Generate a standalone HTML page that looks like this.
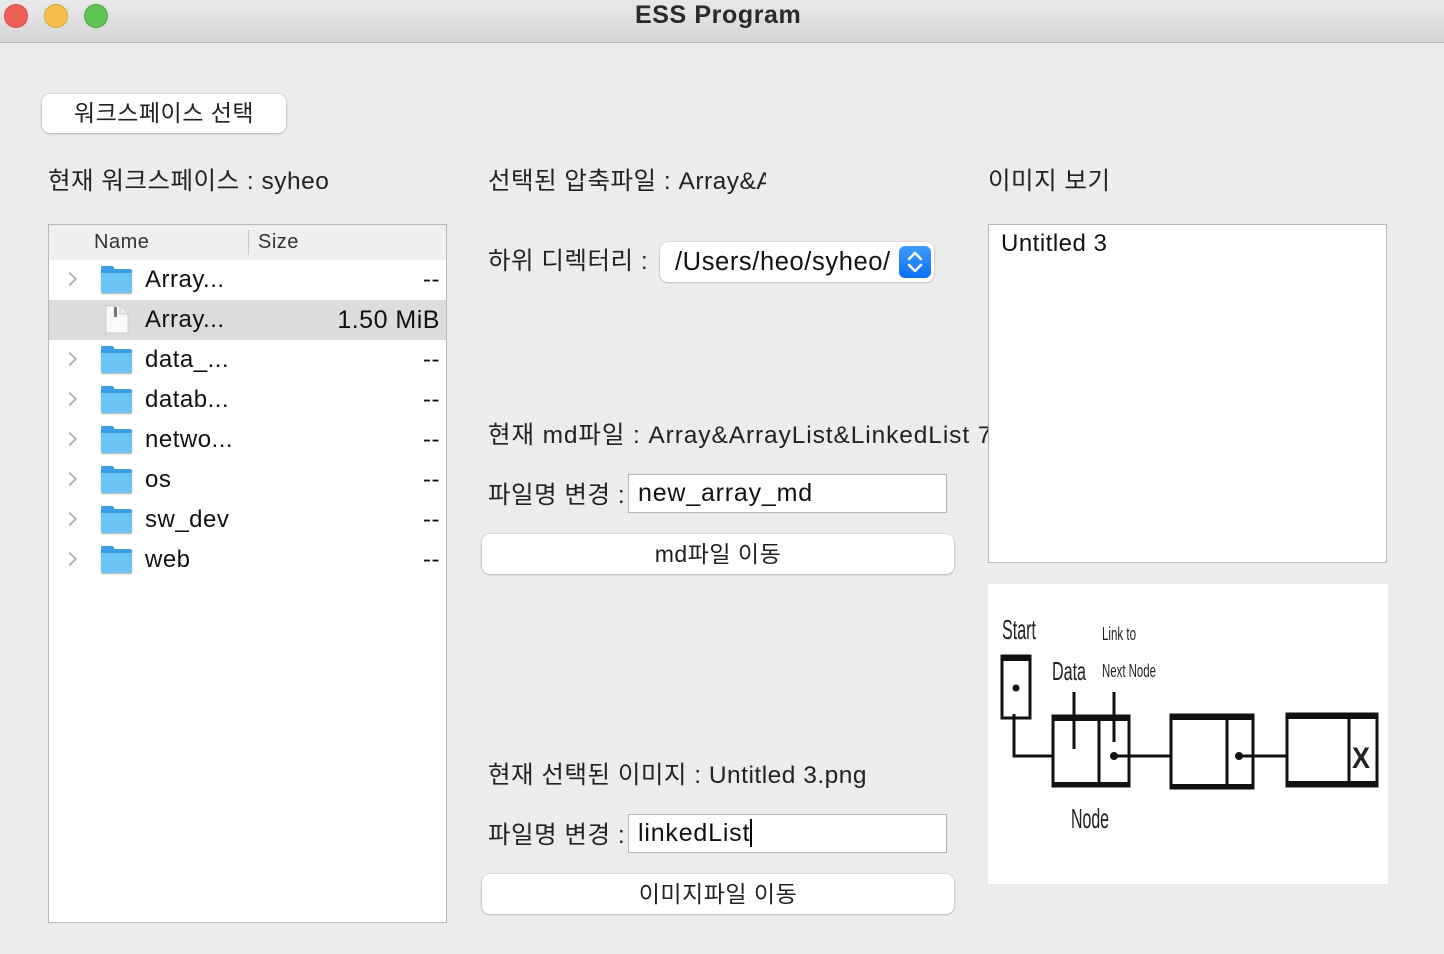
<!DOCTYPE html>
<html><head><meta charset="utf-8">
<style>
*{margin:0;padding:0;box-sizing:border-box}
body{width:1444px;height:954px;background:#ececec;font-family:"Liberation Sans","Noto Sans CJK KR",sans-serif;color:#222;position:relative;overflow:hidden}
.abs{position:absolute;white-space:nowrap}
.title{left:0;top:0;width:1444px;height:43px;background:linear-gradient(#e8e8e8,#d6d6d6);border-bottom:1px solid #b8b8b8}
.dot{position:absolute;top:4px;width:24px;height:24px;border-radius:50%}
.lbl{font-size:24.5px;line-height:30px;letter-spacing:0.5px}
.btn{background:#fff;border-radius:8px;box-shadow:0 0.5px 2px rgba(0,0,0,.35);text-align:center;font-size:23px;line-height:40px;color:#222;letter-spacing:0.5px}
.input{background:#fff;border:1px solid #b5b5b5;font-size:25px;line-height:36px;padding-left:9px;color:#111;letter-spacing:0.8px}
.tree{left:48px;top:224px;width:399px;height:699px;background:#fff;border:1px solid #b8b8b8}
.hdr{position:absolute;left:0;top:0;width:397px;height:35px;background:#efefef;font-size:20px;line-height:34px;color:#333;letter-spacing:0.5px}
.row{position:absolute;left:0;width:397px;height:40px;font-size:24px;line-height:40px;color:#111;letter-spacing:0.5px}
.chev{position:absolute;left:16px;top:14px;width:10px;height:10px;border-right:2px solid #b5b5b5;border-top:2px solid #b5b5b5;transform:rotate(45deg)}
.fold{position:absolute;left:52px;top:9px;width:31px;height:24px;background:#6cc4f5;border-radius:2px;border-top:4px solid #3b9ee0;box-shadow:0 1px 1px rgba(0,0,0,.3)}
.fold:before{content:"";position:absolute;left:0;top:-7px;width:13px;height:4px;background:#3b9ee0;border-radius:2px 2px 0 0}
.name{position:absolute;left:96px}
.size{position:absolute;right:6px}
</style></head><body>
<div class="abs title">
 <div class="dot" style="left:4px;background:#ee5f57;border:1px solid #d9463e"></div>
 <div class="dot" style="left:44px;background:#f5be4f;border:1px solid #dea236"></div>
 <div class="dot" style="left:84px;background:#61c554;border:1px solid #4aa83d"></div>
 <div class="abs" style="left:635px;top:0;font-size:25px;font-weight:bold;line-height:30px;color:#2a2a2a;letter-spacing:0.6px">ESS Program</div>
</div>

<div class="abs btn" style="left:42px;top:94px;width:244px;height:39px;line-height:38px">워크스페이스 선택</div>
<div class="abs lbl" style="left:48px;top:167px">현재 워크스페이스 : syheo</div>

<div class="abs tree">
 <div class="hdr"><span style="position:absolute;left:45px">Name</span><span style="position:absolute;left:199px;top:5px;width:1px;height:25px;background:#c8c8c8"></span><span style="position:absolute;left:209px">Size</span></div>
 <div class="row" style="top:35px"><div class="chev"></div><div class="fold"></div><span class="name">Array...</span><span class="size">--</span></div>
 <div class="row" style="top:75px;background:#dcdcdc"><svg style="position:absolute;left:54px;top:5px" width="28" height="30"><path d="M3 1H17L25 9V28H3Z" fill="#fafafa" stroke="#ccc"/><path d="M17 1V9H25" fill="#eee" stroke="#ccc"/><rect x="11" y="2" width="3" height="10" fill="#777"/></svg><span class="name">Array...</span><span class="size" style="font-size:25px">1.50 MiB</span></div>
 <div class="row" style="top:115px"><div class="chev"></div><div class="fold"></div><span class="name">data_...</span><span class="size">--</span></div>
 <div class="row" style="top:155px"><div class="chev"></div><div class="fold"></div><span class="name">datab...</span><span class="size">--</span></div>
 <div class="row" style="top:195px"><div class="chev"></div><div class="fold"></div><span class="name">netwo...</span><span class="size">--</span></div>
 <div class="row" style="top:235px"><div class="chev"></div><div class="fold"></div><span class="name">os</span><span class="size">--</span></div>
 <div class="row" style="top:275px"><div class="chev"></div><div class="fold"></div><span class="name">sw_dev</span><span class="size">--</span></div>
 <div class="row" style="top:315px"><div class="chev"></div><div class="fold"></div><span class="name">web</span><span class="size">--</span></div>
</div>

<div class="abs lbl" style="left:488px;top:167px;width:278px;overflow:hidden">선택된 압축파일 : Array&amp;ArrayList</div>
<div class="abs lbl" style="left:488px;top:247px">하위 디렉터리 :</div>
<div class="abs" style="left:660px;top:242px;width:274px;height:40px;background:#fff;border-radius:8px;box-shadow:0 0.5px 2px rgba(0,0,0,.3);overflow:hidden">
 <div class="abs" style="left:15px;top:0;font-size:25.5px;line-height:40px;color:#111;letter-spacing:0.6px">/Users/heo/syheo/</div>
 <div class="abs" style="right:3px;top:4px;width:32px;height:32px;background:linear-gradient(#3f9bff,#0a6ff5);border-radius:6px">
  <svg width="32" height="32"><path d="M10 13L16 7L22 13M10 19L16 25L22 19" fill="none" stroke="#fff" stroke-width="2.5" stroke-linecap="round" stroke-linejoin="round"/></svg>
 </div>
</div>

<div class="abs lbl" style="left:488px;top:421px;width:500px;overflow:hidden;letter-spacing:0.9px">현재 md파일 : Array&amp;ArrayList&amp;LinkedList 7</div>
<div class="abs lbl" style="left:488px;top:481px">파일명 변경 :</div>
<div class="abs input" style="left:628px;top:474px;width:319px;height:39px">new_array_md</div>
<div class="abs btn" style="left:482px;top:534px;width:472px;height:40px">md파일 이동</div>

<div class="abs lbl" style="left:488px;top:761px">현재 선택된 이미지 : Untitled 3.png</div>
<div class="abs lbl" style="left:488px;top:821px">파일명 변경 :</div>
<div class="abs input" style="left:628px;top:814px;width:319px;height:39px">linkedList<span style="display:inline-block;width:2px;height:28px;background:#000;vertical-align:-6px"></span></div>
<div class="abs btn" style="left:482px;top:874px;width:472px;height:40px">이미지파일 이동</div>

<div class="abs lbl" style="left:988px;top:167px">이미지 보기</div>
<div class="abs" style="left:988px;top:224px;width:399px;height:339px;background:#fff;border:1px solid #b8b8b8">
 <div class="abs" style="left:12px;top:4px;font-size:24px;line-height:30px;color:#111;letter-spacing:0.5px">Untitled 3</div>
</div>

<div class="abs" style="left:988px;top:584px;width:400px;height:300px;background:#fff">
<svg width="400" height="300" font-family="Liberation Sans, sans-serif" fill="#222">
 <g fill="none" stroke="#111" stroke-width="3">
  <rect x="14" y="72" width="28" height="62"/>
  <rect x="65" y="132" width="76" height="70"/><line x1="111" y1="132" x2="111" y2="202"/>
  <rect x="183" y="131" width="82" height="73"/><line x1="239" y1="131" x2="239" y2="204"/>
  <rect x="299" y="130" width="90" height="72"/><line x1="361" y1="130" x2="361" y2="202"/>
  <path d="M26 130V172H65"/>
  <line x1="126" y1="172" x2="183" y2="172"/>
  <line x1="251" y1="172" x2="299" y2="172"/>
  <line x1="86" y1="108" x2="86" y2="165"/>
  <line x1="126" y1="108" x2="126" y2="158"/>
 </g>
 <rect x="14" y="72" width="28" height="5" fill="#111"/>
 <rect x="65" y="132" width="76" height="5" fill="#111"/><rect x="65" y="198" width="76" height="5" fill="#111"/>
 <rect x="183" y="131" width="82" height="5" fill="#111"/><rect x="183" y="200" width="82" height="5" fill="#111"/>
 <rect x="299" y="130" width="90" height="5" fill="#111"/><rect x="299" y="197" width="90" height="5" fill="#111"/>
 <circle cx="28" cy="104" r="3.5" fill="#111"/>
 <circle cx="126" cy="172" r="4" fill="#111"/>
 <circle cx="251" cy="172" r="4" fill="#111"/>
 <text x="14" y="55" font-size="28" textLength="34" lengthAdjust="spacingAndGlyphs">Start</text>
 <text x="64" y="96" font-size="26" textLength="34" lengthAdjust="spacingAndGlyphs">Data</text>
 <text x="114" y="56" font-size="18" textLength="34" lengthAdjust="spacingAndGlyphs">Link to</text>
 <text x="114" y="93" font-size="18" textLength="54" lengthAdjust="spacingAndGlyphs">Next Node</text>
 <text x="83" y="244" font-size="28" textLength="38" lengthAdjust="spacingAndGlyphs">Node</text>
 <text x="364" y="184" font-size="30" font-weight="bold" textLength="18" lengthAdjust="spacingAndGlyphs">X</text>
</svg>
</div>
</body></html>
